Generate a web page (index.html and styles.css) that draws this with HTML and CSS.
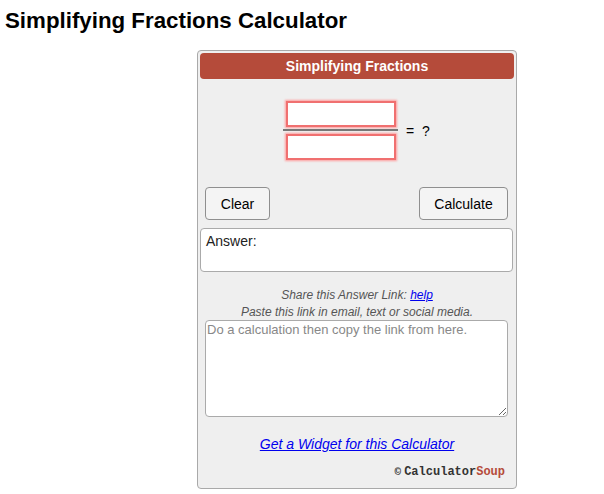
FILE: index.html
```html
<!DOCTYPE html>
<html>
<head>
<meta charset="utf-8">
<link rel="stylesheet" href="styles.css">
</head>
<body>
<h1 class="title">Simplifying Fractions Calculator</h1>
<div class="widget">
  <div class="head">Simplifying Fractions</div>
  <div class="fraction-row">
    <div class="fraction">
      <input class="num" type="text">
      <div class="bar"></div>
      <input class="num" type="text">
    </div>
    <div class="eq">= &nbsp;?</div>
  </div>
  <div class="buttons">
    <button class="btn btn-clear">Clear</button>
    <button class="btn btn-calc">Calculate</button>
  </div>
  <div class="answer">Answer:</div>
  <div class="share">
    <div>Share this Answer Link: <a href="#" class="help">help</a></div>
    <div>Paste this link in email, text or social media.</div>
  </div>
  <textarea class="link-area" placeholder="Do a calculation then copy the link from here."></textarea>
  <div class="widget-link"><a href="#">Get a Widget for this Calculator</a></div>
  <div class="brand"><span class="copy">&copy;</span>Calculator<span class="soup">Soup</span></div>
</div>
</body>
</html>
```
FILE: styles.css
```css
html, body { margin: 0; padding: 0; background: #fff; }
body { font-family: "Liberation Sans", Arial, sans-serif; color: #000; }
.title {
  font-size: 22.3px;
  font-weight: bold;
  margin: 0;
  padding: 8px 0 0 5px;
  line-height: 26px;
}
.widget {
  box-sizing: border-box;
  width: 320px;
  margin: 16px 0 0 197px;
  border: 1px solid #a9a9a9;
  border-radius: 4px;
  background: #efefef;
  padding: 2px 2px 0 2px;
  height: 439px;
  display: flex;
  flex-direction: column;
}
.head {
  height: 26px;
  line-height: 26px;
  background: #b54b3a;
  border-radius: 4px;
  color: #fff;
  font-weight: bold;
  font-size: 14px;
  text-align: center;
}
.fraction-row {
  display: flex;
  align-items: center;
  margin: 22px 0 0 83px;
}
.fraction {
  display: flex;
  flex-direction: column;
  align-items: center;
  width: 115px;
}
.num {
  box-sizing: border-box;
  width: 110px;
  height: 26px;
  margin: 0;
  border: 2px solid #f07070;
  box-shadow: 0 0 2px 1px #ff9d9d;
  background: #fff;
  outline: none;
}
.bar {
  width: 115px;
  height: 2px;
  background: #777;
  margin: 2px 0 3px;
}
.eq {
  font-size: 14px;
  margin-left: 8px;
  margin-top: 0;
}
.buttons {
  display: flex;
  justify-content: space-between;
  margin: 27px 6px 0 5px;
}
.btn {
  box-sizing: border-box;
  height: 33px;
  border: 1px solid #8f8f8f;
  border-radius: 4px;
  background: #f4f4f4;
  font-family: "Liberation Sans", Arial, sans-serif;
  font-size: 14px;
  color: #000;
  padding: 0;
}
.btn-clear { width: 65px; }
.btn-calc { width: 89px; }
.answer {
  box-sizing: border-box;
  margin-top: 8px;
  width: 313px;
  height: 44px;
  background: #fff;
  border: 1px solid #aaa;
  border-radius: 4px;
  padding: 4px 5px;
  font-size: 14px;
  color: #222;
}
.share {
  margin-top: 15px;
  text-align: center;
  font-size: 12px;
  font-style: italic;
  color: #555;
  line-height: 17px;
}
.help { color: #00e; }
.link-area {
  box-sizing: border-box;
  display: block;
  margin: -1px 0 0 5px;
  width: 303px;
  height: 97px;
  border: 1px solid #aaa;
  border-radius: 4px;
  font-family: "Liberation Sans", Arial, sans-serif;
  font-size: 13px;
  padding: 1px 1px;
  resize: both;
  background: #fff;
}
.link-area::placeholder { color: #888; }
.widget-link {
  margin-top: 19px;
  text-align: center;
  font-size: 14px;
  font-style: italic;
  line-height: 17px;
}
.widget-link a { color: #00e; }
.brand {
  margin-top: 12px;
  text-align: right;
  padding-right: 9px;
  font-family: "Liberation Mono", "Courier New", monospace;
  font-weight: bold;
  font-size: 12px;
  color: #333;
}
.copy { font-size: 11px; margin-right: 3px; }
.soup { color: #b54b3a; }
```
